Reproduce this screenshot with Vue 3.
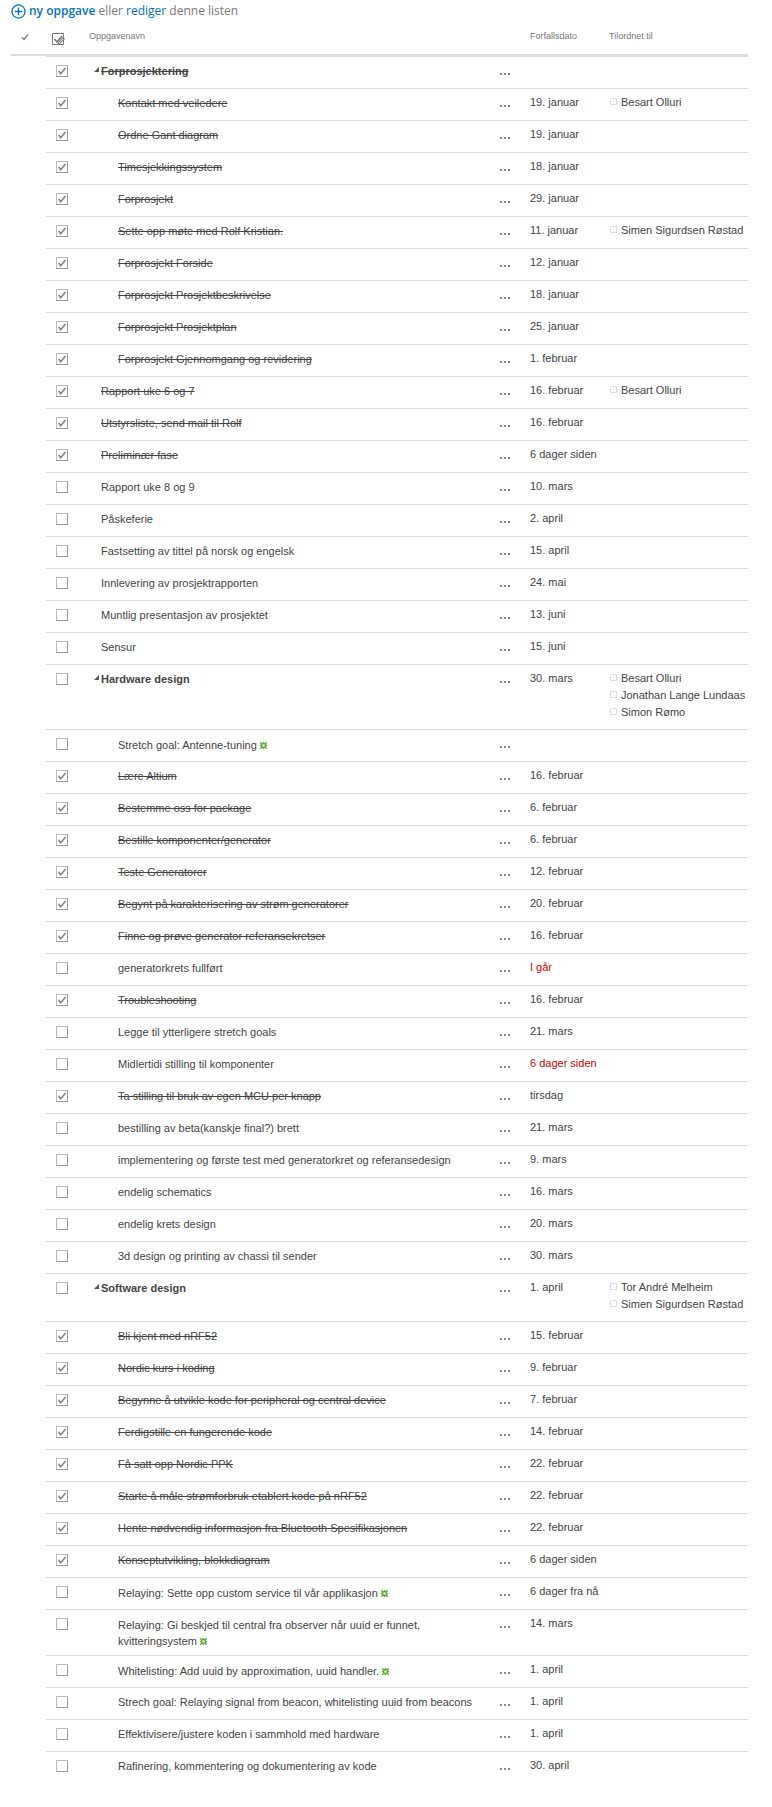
<script setup>
import { ref } from 'vue'

const raw = [
  ['g', 1, 'Forprosjektering', ''],
  ['c', 1, 'Kontakt med veiledere', '19. januar', ['Besart Olluri']],
  ['c', 1, 'Ordne Gant diagram', '19. januar'],
  ['c', 1, 'Timesjekkingssystem', '18. januar'],
  ['c', 1, 'Forprosjekt', '29. januar'],
  ['c', 1, 'Sette opp møte med Rolf Kristian.', '11. januar', ['Simen Sigurdsen Røstad']],
  ['c', 1, 'Forprosjekt Forside', '12. januar'],
  ['c', 1, 'Forprosjekt Prosjektbeskrivelse', '18. januar'],
  ['c', 1, 'Forprosjekt Prosjektplan', '25. januar'],
  ['c', 1, 'Forprosjekt Gjennomgang og revidering', '1. februar'],
  ['t', 1, 'Rapport uke 6 og 7', '16. februar', ['Besart Olluri']],
  ['t', 1, 'Utstyrsliste, send mail til Rolf', '16. februar'],
  ['t', 1, 'Preliminær fase', '6 dager siden'],
  ['t', 0, 'Rapport uke 8 og 9', '10. mars'],
  ['t', 0, 'Påskeferie', '2. april'],
  ['t', 0, 'Fastsetting av tittel på norsk og engelsk', '15. april'],
  ['t', 0, 'Innlevering av prosjektrapporten', '24. mai'],
  ['t', 0, 'Muntlig presentasjon av prosjektet', '13. juni'],
  ['t', 0, 'Sensur', '15. juni'],
  ['g', 0, 'Hardware design', '30. mars', ['Besart Olluri', 'Jonathan Lange Lundaas', 'Simon Rømo']],
  ['c', 0, 'Stretch goal: Antenne-tuning', '', [], 'new'],
  ['c', 1, 'Lære Altium', '16. februar'],
  ['c', 1, 'Bestemme oss for package', '6. februar'],
  ['c', 1, 'Bestille komponenter/generator', '6. februar'],
  ['c', 1, 'Teste Generatorer', '12. februar'],
  ['c', 1, 'Begynt på karakterisering av strøm generatorer', '20. februar'],
  ['c', 1, 'Finne og prøve generator referansekretser', '16. februar'],
  ['c', 0, 'generatorkrets fullført', 'I går', [], 'late'],
  ['c', 1, 'Troubleshooting', '16. februar'],
  ['c', 0, 'Legge til ytterligere stretch goals', '21. mars'],
  ['c', 0, 'Midlertidi stilling til komponenter', '6 dager siden', [], 'late'],
  ['c', 1, 'Ta stilling til bruk av egen MCU per knapp', 'tirsdag'],
  ['c', 0, 'bestilling av beta(kanskje final?) brett', '21. mars'],
  ['c', 0, 'implementering og første test med generatorkret og referansedesign', '9. mars'],
  ['c', 0, 'endelig schematics', '16. mars'],
  ['c', 0, 'endelig krets design', '20. mars'],
  ['c', 0, '3d design og printing av chassi til sender', '30. mars'],
  ['g', 0, 'Software design', '1. april', ['Tor André Melheim', 'Simen Sigurdsen Røstad']],
  ['c', 1, 'Bli kjent med nRF52', '15. februar'],
  ['c', 1, 'Nordic kurs i koding', '9. februar'],
  ['c', 1, 'Begynne å utvikle kode for peripheral og central device', '7. februar'],
  ['c', 1, 'Ferdigstille en fungerende kode', '14. februar'],
  ['c', 1, 'Få satt opp Nordic PPK', '22. februar'],
  ['c', 1, 'Starte å måle strømforbruk etablert kode på nRF52', '22. februar'],
  ['c', 1, 'Hente nødvendig informasjon fra Bluetooth Spesifikasjonen', '22. februar'],
  ['c', 1, 'Konseptutvikling, blokkdiagram', '6 dager siden'],
  ['c', 0, 'Relaying: Sette opp custom service til vår applikasjon', '6 dager fra nå', [], 'new'],
  ['c', 0, 'Relaying: Gi beskjed til central fra observer når uuid er funnet, kvitteringsystem', '14. mars', [], 'new'],
  ['c', 0, 'Whitelisting: Add uuid by approximation, uuid handler.', '1. april', [], 'new'],
  ['c', 0, 'Strech goal: Relaying signal from beacon, whitelisting uuid from beacons', '1. april'],
  ['c', 0, 'Effektivisere/justere koden i sammhold med hardware', '1. april'],
  ['c', 0, 'Rafinering, kommentering og dokumentering av kode', '30. april'],
]

const kinds = { g: 'group', c: 'child', t: 'top' }

const tasks = ref(
  raw.map(([kind, done, name, due, people = [], flag = '']) => ({
    kind: kinds[kind],
    done: !!done,
    name,
    due,
    people,
    flag,
  })),
)
</script>

<template>
  <main class="list">
    <p class="toolbar">
      <svg class="plus" viewBox="0 0 16 16" aria-hidden="true">
        <circle cx="8" cy="8" r="7" />
        <path d="M8 4v8M4 8h8" />
      </svg>
      <span><a href="#" class="new-task">ny oppgave</a> eller <a href="#">rediger</a> denne listen</span>
    </p>
    <table>
      <colgroup>
        <col class="w-select" />
        <col class="w-done" />
        <col />
        <col class="w-menu" />
        <col class="w-due" />
        <col class="w-people" />
      </colgroup>
      <thead>
        <tr>
          <th class="select">
            <svg viewBox="0 0 8 8" aria-label="Velg alle"><path d="M1 4.5l2 2L7 1.5" /></svg>
          </th>
          <th class="done-head">
            <svg viewBox="0 0 13 13" aria-label="Fullført">
              <path class="frame" d="M.5 .5h11v11H.5z" />
              <path class="tick" d="M2.5 6l2.5 3L10 3" />
              <path class="pencil" d="M5 12l1-3 5-5 2 2-5 5z" />
              <path class="shine" d="M7 10l4-4" />
            </svg>
          </th>
          <th>Oppgavenavn</th>
          <th></th>
          <th>Forfallsdato</th>
          <th>Tilordnet til</th>
        </tr>
      </thead>
      <tbody>
        <tr v-for="task in tasks" :key="task.name" :class="{ finished: task.done }">
          <td class="blank"></td>
          <td class="done">
            <input v-model="task.done" type="checkbox" :aria-label="task.name" />
          </td>
          <td class="name" :class="[task.kind, { fresh: task.flag === 'new' }]">
            <svg v-if="task.kind === 'group'" class="arrow" viewBox="0 0 5 5" aria-hidden="true">
              <path d="M5 0v5H0z" />
            </svg>
            <span class="label">{{ task.name }}</span>
            <svg v-if="task.flag === 'new'" class="burst" viewBox="0 0 7 7" aria-label="Ny">
              <path d="M.3 .3l1.6 1.6M6.7 .3L5.1 1.9M.3 6.7l1.6-1.6M6.7 6.7L5.1 5.1M3.5 0v1.5M3.5 5.5V7M0 3.5h1.5M5.5 3.5H7M1.7 1.7h3.6v3.6H1.7z" />
            </svg>
          </td>
          <td class="menu">
            <button type="button" :aria-label="'Meny for ' + task.name">
              <svg viewBox="0 0 10 2" aria-hidden="true"><path d="M0 0h2v2H0zM4 0h2v2H4zM8 0h2v2H8z" /></svg>
            </button>
          </td>
          <td class="due" :class="{ late: task.flag === 'late' }">{{ task.due }}</td>
          <td class="people">
            <div v-for="person in task.people" :key="person" class="person">
              <i class="presence"></i>{{ person }}
            </div>
          </td>
        </tr>
      </tbody>
    </table>
  </main>
</template>

<style>
body {
  background: #fff;
}
</style>

<style scoped>
.list {
  padding: 2px 24px 24px 11px;
  font: 11px/16px "Liberation Sans", Arial, sans-serif;
  color: #444;
}
.toolbar {
  display: flex;
  align-items: center;
  gap: 3px;
  margin: 0;
  height: 18px;
  font: 12px/18px "Open Sans", "Noto Sans", sans-serif;
  color: #777;
}
.plus {
  width: 15px;
  height: 15px;
  fill: none;
  stroke: #0072c6;
  stroke-width: 1.4;
}
.toolbar a {
  color: #0072c6;
  text-decoration: none;
}
.toolbar .new-task {
  font-weight: 600;
}
table {
  width: 100%;
  table-layout: fixed;
  border-collapse: separate;
  border-spacing: 0;
}
.w-select { width: 35px; }
.w-done { width: 37px; }
.w-menu { width: 36px; }
.w-due { width: 79px; }
.w-people { width: 145px; }
th {
  height: 36px;
  padding: 8px 0 0 6px;
  box-sizing: border-box;
  border-bottom: 2px solid #dcdcdc;
  vertical-align: top;
  text-align: left;
  font-size: 9px;
  font-weight: 400;
  color: #777;
}
th svg {
  display: block;
  fill: none;
  stroke: #777;
}
.select svg {
  width: 8px;
  height: 8px;
  margin: 5px 0 0 4px;
  stroke-width: 1.3;
}
.done-head svg {
  width: 13px;
  height: 13px;
  margin: 5px 0 0;
}
.done-head .tick {
  stroke-width: 1.5;
}
.done-head .pencil {
  fill: #888;
  stroke: none;
}
.done-head .shine {
  stroke: #ddd;
}
td {
  height: 32px;
  box-sizing: border-box;
  padding: 0;
  border-top: 1px solid #dcdcdc;
  vertical-align: top;
}
.blank {
  border-top-color: transparent;
}
.done,
.name,
.menu,
.due {
  border-right: 1px solid #fff;
}
.done input {
  appearance: none;
  display: block;
  width: 12px;
  height: 12px;
  margin: 8px 0 0 10px;
  border: 1px solid #999;
  border-top-color: #bbb;
  border-left-color: #bbb;
  background: #fff;
}
.done input:checked {
  background: #fff url("data:image/svg+xml,%3Csvg xmlns='http://www.w3.org/2000/svg' viewBox='0 0 10 10'%3E%3Cpath d='M1.5 5l2.3 2.7L8.5 2' fill='none' stroke='%23888' stroke-width='1.7'/%3E%3C/svg%3E");
}
.name {
  padding: 6px 12px 7px 18px;
}
.name.child {
  padding-left: 35px;
}
.name.group {
  padding-left: 11px;
  font-weight: 700;
}
.name.fresh {
  padding-top: 7px;
  padding-bottom: 6px;
}
.finished .label {
  text-decoration: line-through;
}
.arrow {
  width: 5px;
  height: 5px;
  margin-right: 2px;
  vertical-align: 3px;
  fill: #555;
}
.burst {
  width: 7px;
  height: 7px;
  margin-left: 3px;
  fill: none;
  stroke: #62ab3c;
  stroke-width: 1.4;
}
.menu button {
  display: block;
  margin: 16px 0 0 12px;
  padding: 0;
  border: 0;
  background: none;
  cursor: pointer;
}
.menu svg {
  display: block;
  width: 10px;
  height: 2px;
  fill: #888;
}
.due {
  padding: 5px 0 0 6px;
  white-space: nowrap;
}
.late {
  color: #c00;
}
.people {
  padding: 4px 0 9px 7px;
  white-space: nowrap;
}
.person {
  display: flex;
  align-items: center;
  height: 17px;
}
.presence {
  flex: none;
  width: 5px;
  height: 5px;
  margin-right: 4px;
  border: 1px solid #ddd;
}
</style>
